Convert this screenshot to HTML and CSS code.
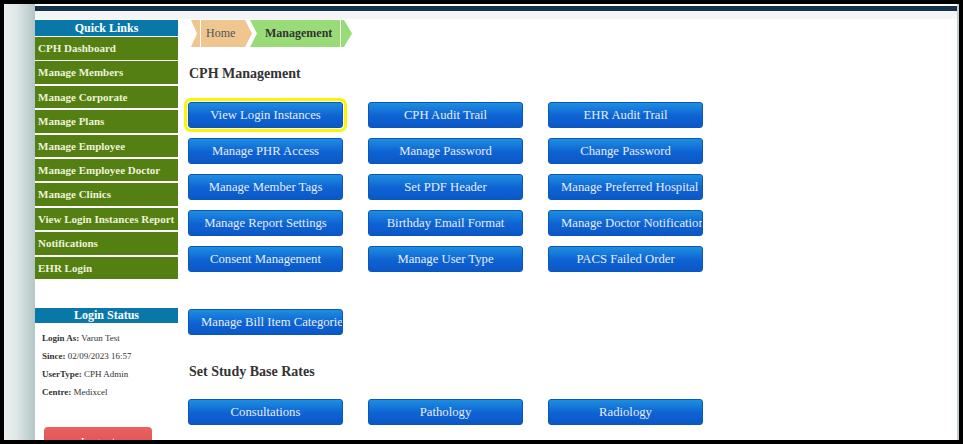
FILE: index.html
```html
<!DOCTYPE html>
<html>
<head>
<meta charset="utf-8">
<title>CPH Management</title>
<link rel="stylesheet" href="styles.css">
</head>
<body>
<div class="frame">
  <div class="leftstrip"></div>
  <div class="page">
    <div class="topbar"></div>
    <div class="subbar"></div>
    <div class="content">
      <aside class="sidebar">
        <div class="side-head">Quick Links</div>
        <ul class="links">
          <li>CPH Dashboard</li>
          <li>Manage Members</li>
          <li>Manage Corporate</li>
          <li>Manage Plans</li>
          <li>Manage Employee</li>
          <li>Manage Employee Doctor</li>
          <li>Manage Clinics</li>
          <li>View Login Instances Report</li>
          <li>Notifications</li>
          <li>EHR Login</li>
        </ul>
        <div class="side-head status-head">Login Status</div>
        <div class="status">
          <div><b>Login As:</b> Varun Test</div>
          <div><b>Since:</b> 02/09/2023 16:57</div>
          <div><b>UserType:</b> CPH Admin</div>
          <div><b>Centre:</b> Medixcel</div>
        </div>
        <div class="logout">Logout</div>
      </aside>
      <main class="main">
        <nav class="crumbs">
          <span class="crumb home">Home</span>
          <span class="crumb current">Management</span>
        </nav>
        <h2 class="title">CPH Management</h2>
        <div class="grid">
          <div class="btn focused">View Login Instances</div>
          <div class="btn">CPH Audit Trail</div>
          <div class="btn">EHR Audit Trail</div>
          <div class="btn">Manage PHR Access</div>
          <div class="btn">Manage Password</div>
          <div class="btn">Change Password</div>
          <div class="btn">Manage Member Tags</div>
          <div class="btn">Set PDF Header</div>
          <div class="btn">Manage Preferred Hospital</div>
          <div class="btn">Manage Report Settings</div>
          <div class="btn">Birthday Email Format</div>
          <div class="btn">Manage Doctor Notification</div>
          <div class="btn">Consent Management</div>
          <div class="btn">Manage User Type</div>
          <div class="btn">PACS Failed Order</div>
        </div>
        <div class="grid single">
          <div class="btn">Manage Bill Item Categories</div>
        </div>
        <h2 class="title title2">Set Study Base Rates</h2>
        <div class="grid">
          <div class="btn">Consultations</div>
          <div class="btn">Pathology</div>
          <div class="btn">Radiology</div>
        </div>
      </main>
    </div>
  </div>
</div>
</body>
</html>
```
FILE: styles.css
```css
html, body {
  margin: 0;
  padding: 0;
}
body {
  width: 963px;
  height: 444px;
  overflow: hidden;
  background: #000;
  font-family: "Liberation Serif", "Times New Roman", serif;
}
.frame {
  box-sizing: border-box;
  width: 963px;
  height: 444px;
  padding: 4px 4px 4px 4px;
  display: flex;
}
.leftstrip {
  width: 31px;
  flex: none;
  background: linear-gradient(to right, #eaf0f0, #dfe7e7 40%, #b3c6c6);
}
.page {
  flex: 1;
  background: #fff;
  border-right: 2px solid #c3cdcd;
  display: flex;
  flex-direction: column;
  overflow: hidden;
}
.topbar {
  margin-top: 2px;
  height: 5px;
  background: #15324d;
  flex: none;
}
.subbar {
  height: 8px;
  background: #f4f6f6;
  flex: none;
}
.content {
  display: flex;
  align-items: flex-start;
}
.sidebar {
  width: 143px;
  flex: none;
  padding-top: 1px;
}
.side-head {
  height: 16px;
  line-height: 16px;
  background: #0978a8;
  color: #fff;
  font-weight: bold;
  font-size: 12px;
  text-align: center;
  margin-bottom: 1px;
}
.links {
  list-style: none;
  margin: 0;
  padding: 0;
}
.links li {
  height: 22.5px;
  line-height: 22.5px;
  margin-bottom: 1.9px;
  background: #548013;
  color: #eef2dc;
  font-weight: bold;
  font-size: 11px;
  padding-left: 3px;
  white-space: nowrap;
  overflow: hidden;
}
.status-head {
  margin-top: 29px;
  height: 15px;
  line-height: 15px;
}
.status {
  padding: 5px 0 0 7px;
  font-size: 9px;
  color: #333;
}
.status div {
  line-height: 18px;
}
.logout {
  margin: 26px 0 0 9px;
  width: 108px;
  height: 30px;
  line-height: 30px;
  border-radius: 4px 4px 0 0;
  background: linear-gradient(#ea6262, #d84848);
  color: #fff;
  font-size: 12px;
  text-align: center;
}
.main {
  margin-left: 10px;
  flex: 1;
}
.crumbs {
  margin-top: 1px;
  margin-left: 3px;
  display: flex;
  height: 27px;
}
.crumb {
  height: 27px;
  display: flex;
  align-items: center;
  font-size: 12px;
}
.home {
  width: 61px;
  background: linear-gradient(to right, #efc690 0 9px, #fff 9px 10px, #efc690 10px);
  clip-path: polygon(0 0, calc(100% - 7px) 0, 100% 50%, calc(100% - 7px) 100%, 0 100%, 6px 50%);
  color: #555;
  padding-left: 15px;
  box-sizing: border-box;
}
.current {
  margin-left: -2px;
  width: 102px;
  background: linear-gradient(to right, #99dc77 0 90px, #fff 90px 91px, #99dc77 91px);
  clip-path: polygon(0 0, calc(100% - 8px) 0, 100% 50%, calc(100% - 8px) 100%, 0 100%, 7px 50%);
  color: #333;
  font-weight: bold;
  padding-left: 15px;
  box-sizing: border-box;
}
.title {
  margin: 19px 0 0 1px;
  font-size: 14px;
  line-height: 16px;
  color: #333;
  font-weight: bold;
}
.title2 {
  margin-top: 29px;
}
.grid {
  margin-top: 20px;
  display: grid;
  grid-template-columns: repeat(3, 155px);
  column-gap: 25px;
  row-gap: 10px;
}
.grid.single {
  margin-top: 37px;
}
.title2 + .grid {
  margin-top: 19px;
}
.btn {
  box-sizing: border-box;
  height: 26px;
  line-height: 24px;
  border: 1px solid #0c56b8;
  border-radius: 3px;
  background: linear-gradient(#1d8ee0, #0e62d2 55%, #0b58c8);
  color: #e6eefa;
  font-size: 12.7px;
  text-align: center;
  white-space: nowrap;
  overflow: hidden;
  padding: 0 12px;
}
.btn.focused {
  outline: 3px solid #f7f700;
  outline-offset: 1px;
}
```
